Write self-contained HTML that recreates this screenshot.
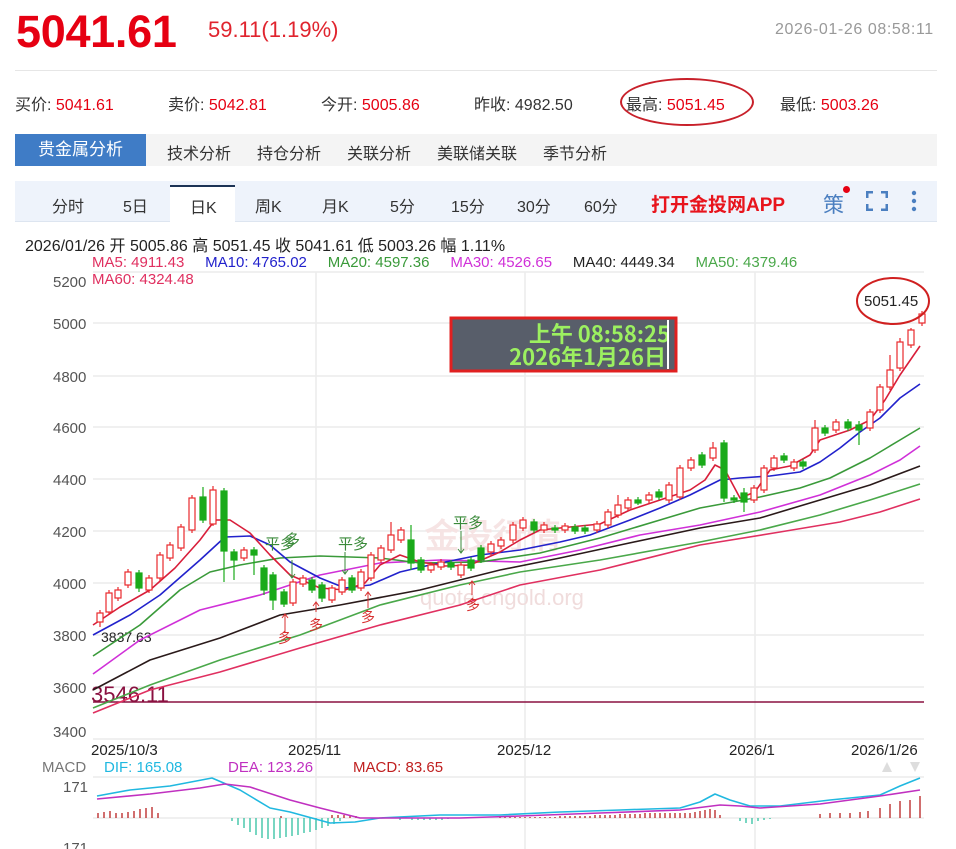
<!DOCTYPE html>
<html><head><meta charset="utf-8">
<style>
*{margin:0;padding:0;box-sizing:border-box}
body{width:956px;height:849px;background:#fff;font-family:"Liberation Sans","Noto Sans CJK SC",sans-serif;position:relative;overflow:hidden;color:#333}
.a{position:absolute;white-space:nowrap}
.r{color:#e60012}
</style></head><body>
<div class="a r" style="left:16px;top:6px;font-size:45px;font-weight:bold;letter-spacing:-0.3px">5041.61</div>
<div class="a r" style="left:208px;top:17px;font-size:22px;color:#e0242e">59.11(1.19%)</div>
<div class="a" style="left:775px;top:21px;font-size:16px;color:#999;letter-spacing:0.6px">2026-01-26 08:58:11</div>
<div class="a" style="left:15px;top:70px;width:922px;height:1px;background:#e6e6e6"></div>
<div class="a" style="left:15px;top:91px;font-size:16px;color:#333">买价: <span class="r">5041.61</span></div>
<div class="a" style="left:168px;top:91px;font-size:16px">卖价: <span class="r">5042.81</span></div>
<div class="a" style="left:321px;top:91px;font-size:16px">今开: <span class="r">5005.86</span></div>
<div class="a" style="left:474px;top:91px;font-size:16px">昨收: 4982.50</div>
<div class="a" style="left:626px;top:91px;font-size:16px">最高: <span class="r">5051.45</span></div>
<div class="a" style="left:620px;top:78px;width:134px;height:48px;border:2px solid #c8202a;border-radius:50%"></div>
<div class="a" style="left:780px;top:91px;font-size:16px">最低: <span class="r">5003.26</span></div>
<div class="a" style="left:15px;top:134px;width:922px;height:32px;background:#f4f4f4"></div>
<div class="a" style="left:15px;top:134px;width:131px;height:32px;background:#3f7cc6;color:#fff;font-size:17px;line-height:32px;text-align:center">贵金属分析</div>
<div class="a" style="left:167px;top:140px;font-size:16px">技术分析</div>
<div class="a" style="left:257px;top:140px;font-size:16px">持仓分析</div>
<div class="a" style="left:347px;top:140px;font-size:16px">关联分析</div>
<div class="a" style="left:437px;top:140px;font-size:16px">美联储关联</div>
<div class="a" style="left:543px;top:140px;font-size:16px">季节分析</div>
<div class="a" style="left:15px;top:181px;width:922px;height:41px;background:#eef3fb;border-bottom:1px solid #dde5f0"></div>
<div class="a" style="left:170px;top:185px;width:65px;height:37px;background:#fff;border-top:2px solid #1c3355"></div>
<div class="a" style="left:52px;top:193px;font-size:16px">分时</div>
<div class="a" style="left:123px;top:193px;font-size:16px">5日</div>
<div class="a" style="left:190px;top:194px;font-size:16px">日K</div>
<div class="a" style="left:255px;top:193px;font-size:16px">周K</div>
<div class="a" style="left:322px;top:193px;font-size:16px">月K</div>
<div class="a" style="left:390px;top:193px;font-size:16px">5分</div>
<div class="a" style="left:451px;top:193px;font-size:16px">15分</div>
<div class="a" style="left:517px;top:193px;font-size:16px">30分</div>
<div class="a" style="left:584px;top:193px;font-size:16px">60分</div>
<div class="a" style="left:651px;top:190px;font-size:19px;font-weight:bold;color:#e8141c">打开金投网APP</div>
<div class="a" style="left:823px;top:189px;font-size:21px;color:#4b7fc0">策</div>
<div class="a" style="left:843px;top:186px;width:7px;height:7px;border-radius:50%;background:#e60012"></div>
<svg class="a" style="left:866px;top:191px" width="22" height="20"><path d="M1 7V1h6M15 1h6v6M21 13v6h-6M7 19H1v-6" fill="none" stroke="#4b7fc0" stroke-width="3"/></svg>
<svg class="a" style="left:910px;top:190px" width="8" height="22"><circle cx="4" cy="3" r="2.2" fill="#4b7fc0"/><circle cx="4" cy="11" r="2.2" fill="#4b7fc0"/><circle cx="4" cy="19" r="2.2" fill="#4b7fc0"/></svg>

<div class="a" style="left:25px;top:232px;font-size:16px;color:#222">2026/01/26 开 5005.86 高 5051.45 收 5041.61 低 5003.26 幅 1.11%</div>
<div class="a" style="left:92px;top:254px;font-size:15px"><span style="color:#e03060">MA5: 4911.43</span>&nbsp;&nbsp;&nbsp;&nbsp; <span style="color:#2222cc">MA10: 4765.02</span>&nbsp;&nbsp;&nbsp;&nbsp; <span style="color:#3a9a3a">MA20: 4597.36</span>&nbsp;&nbsp;&nbsp;&nbsp; <span style="color:#d030d8">MA30: 4526.65</span>&nbsp;&nbsp;&nbsp;&nbsp; <span style="color:#222">MA40: 4449.34</span>&nbsp;&nbsp;&nbsp;&nbsp; <span style="color:#4aa84a">MA50: 4379.46</span></div>
<div class="a" style="left:92px;top:271px;font-size:15px;color:#e03060">MA60: 4324.48</div>

<svg class="a" style="left:0;top:0" width="956" height="849" font-family="Liberation Sans, sans-serif">
<g stroke="#ececec" stroke-width="1.5">
<line x1="93" y1="323" x2="924" y2="323"/><line x1="93" y1="376" x2="924" y2="376"/><line x1="93" y1="427" x2="924" y2="427"/><line x1="93" y1="479" x2="924" y2="479"/><line x1="93" y1="531" x2="924" y2="531"/><line x1="93" y1="583" x2="924" y2="583"/><line x1="93" y1="635" x2="924" y2="635"/><line x1="93" y1="687" x2="924" y2="687"/><line x1="93" y1="739" x2="924" y2="739"/>
<line x1="93" y1="272" x2="924" y2="272"/>
<line x1="316" y1="272" x2="316" y2="849"/><line x1="525" y1="272" x2="525" y2="849"/><line x1="755" y1="272" x2="755" y2="849"/>
<line x1="93" y1="777" x2="924" y2="777"/><line x1="93" y1="818" x2="924" y2="818"/>
</g>
<g font-size="15" fill="#555">
<text x="53" y="287">5200</text><text x="53" y="329">5000</text><text x="53" y="382">4800</text><text x="53" y="433">4600</text><text x="53" y="485">4400</text><text x="53" y="537">4200</text><text x="53" y="589">4000</text><text x="53" y="641">3800</text><text x="53" y="693">3600</text><text x="53" y="737">3400</text>
<text x="63" y="792">171</text><text x="63" y="853">171</text>
</g>
<g font-size="15" fill="#222">
<text x="91" y="755">2025/10/3</text><text x="288" y="755">2025/11</text><text x="497" y="755">2025/12</text><text x="729" y="755">2026/1</text><text x="851" y="755">2026/1/26</text>
</g>
<text x="42" y="772" font-size="15" fill="#777">MACD</text>
<text x="104" y="772" font-size="15" fill="#20b8e0">DIF: 165.08</text>
<text x="228" y="772" font-size="15" fill="#c030c0">DEA: 123.26</text>
<text x="353" y="772" font-size="15" fill="#c02020">MACD: 83.65</text>
<path d="M882 772l5-10 5 10zM910 762l5 10 5-10z" fill="#ddd"/>
<text x="420" y="605" font-size="22" fill="#f0dcdc">quote.cngold.org</text>
<text x="425" y="548" font-size="34" fill="#f6e4e4" font-weight="bold">金投行情</text>
<line x1="93" y1="702" x2="924" y2="702" stroke="#8a1040" stroke-width="1.5"/>
<text x="91" y="702" font-size="22" fill="#8a1040">3546.11</text>
<text x="101" y="642" font-size="14" fill="#222">3837.63</text>
<!-- MAs -->
<g fill="none" stroke-width="1.6" stroke-linejoin="round">
<polyline points="93,713 150,690 220,672 300,648 380,625 460,605 520,585 600,570 700,545 780,532 840,522 880,512 920,499" stroke="#e03060"/>
<polyline points="93,708 150,685 220,660 300,635 380,605 460,585 520,572 600,560 700,542 760,530 820,515 870,500 920,484" stroke="#4aa84a"/>
<polyline points="93,690 150,660 220,638 280,615 340,605 420,590 500,570 560,558 620,545 700,528 760,518 820,500 870,485 920,466" stroke="#2a1a1a"/>
<polyline points="93,674 140,640 200,610 260,595 320,575 380,563 440,560 520,562 580,550 640,535 700,525 760,512 820,495 870,475 900,460 920,446" stroke="#d030d8"/>
<polyline points="93,656 140,625 180,590 210,572 240,565 280,558 320,556 380,558 420,563 480,562 540,553 600,538 660,520 700,508 760,497 800,488 830,478 870,458 900,440 920,428" stroke="#3a9a3a"/>
<polyline points="93,635 130,615 160,595 200,560 225,537 250,536 270,545 290,562 320,578 345,588 370,585 400,572 430,565 480,555 520,550 560,542 590,535 630,520 660,508 690,495 710,485 720,480 740,478 770,476 800,472 820,462 840,448 860,432 880,418 900,398 920,384" stroke="#2222cc"/>
<polyline points="93,625 120,607 150,590 175,568 200,540 215,520 230,520 250,533 270,555 290,575 320,588 345,590 365,583 380,565 400,555 420,562 445,566 470,565 500,552 520,540 540,530 570,527 600,524 630,510 660,500 690,490 705,480 715,465 725,470 740,498 755,492 770,470 790,466 810,455 820,440 850,430 870,420 885,400 900,375 920,346" stroke="#d81e3a"/>
</g>
<!-- candles -->
<g stroke="#e8292c" fill="#fff" stroke-width="1.2">
<path d="M100 610v17M109 590v25M118 587v14M128 569v19M149 575v18M160 552v29M170 542v19M181 524v27M192 495v38M213 486v40M244 547v14M293 579v27M303 575v12M332 585v18M342 577v18M361 569v22M371 552v29M381 545v18M391 522v31M401 527v16M431 562v11M441 559v11M461 562v16M491 541v14M501 537v12M513 522v21M523 517v14M544 522v11M565 523v10M597 521v12M608 509v19M618 495v23M628 497v14M649 492v11M669 482v21M680 465v35M691 457v14M713 442v19M754 485v18M764 465v28M774 455v16M794 459v12M815 420v33M836 419v14M870 409v22M880 384v29M890 355v35M900 338v33M911 328v20M922 311v15"/>
<rect x="97" y="613" width="6" height="9"/><rect x="106" y="593" width="6" height="19"/><rect x="115" y="590" width="6" height="8"/><rect x="125" y="572" width="6" height="13"/><rect x="146" y="578" width="6" height="12"/><rect x="157" y="555" width="6" height="23"/><rect x="167" y="545" width="6" height="13"/><rect x="178" y="527" width="6" height="21"/><rect x="189" y="498" width="6" height="32"/><rect x="210" y="490" width="6" height="34"/><rect x="241" y="550" width="6" height="8"/><rect x="290" y="582" width="6" height="21"/><rect x="300" y="578" width="6" height="6"/><rect x="329" y="588" width="6" height="12"/><rect x="339" y="580" width="6" height="12"/><rect x="358" y="572" width="6" height="16"/><rect x="368" y="555" width="6" height="23"/><rect x="378" y="548" width="6" height="12"/><rect x="388" y="535" width="6" height="15"/><rect x="398" y="530" width="6" height="10"/><rect x="428" y="565" width="6" height="5"/><rect x="438" y="562" width="6" height="5"/><rect x="458" y="565" width="6" height="10"/><rect x="488" y="544" width="6" height="8"/><rect x="498" y="540" width="6" height="6"/><rect x="510" y="525" width="6" height="15"/><rect x="520" y="520" width="6" height="8"/><rect x="541" y="525" width="6" height="5"/><rect x="562" y="526" width="6" height="4"/><rect x="594" y="524" width="6" height="6"/><rect x="605" y="512" width="6" height="13"/><rect x="615" y="505" width="6" height="10"/><rect x="625" y="500" width="6" height="8"/><rect x="646" y="495" width="6" height="5"/><rect x="666" y="485" width="6" height="15"/><rect x="677" y="468" width="6" height="29"/><rect x="688" y="460" width="6" height="8"/><rect x="710" y="448" width="6" height="10"/><rect x="751" y="488" width="6" height="12"/><rect x="761" y="468" width="6" height="22"/><rect x="771" y="458" width="6" height="10"/><rect x="791" y="462" width="6" height="6"/><rect x="812" y="428" width="6" height="22"/><rect x="833" y="422" width="6" height="8"/><rect x="867" y="412" width="6" height="16"/><rect x="877" y="387" width="6" height="23"/><rect x="887" y="370" width="6" height="17"/><rect x="897" y="342" width="6" height="26"/><rect x="908" y="330" width="6" height="15"/><rect x="919" y="314" width="6" height="9"/>
</g>
<g stroke="#1aaa1a" fill="#1aaa1a" stroke-width="1.2">
<path d="M139 570v22M203 487v36M224 488v94M234 549v31M254 547v28M264 565v30M273 572v38M284 589v18M312 577v16M322 582v20M352 575v18M411 525v45M421 557v16M451 560v10M471 557v14M481 545v18M534 519v14M555 525v8M575 524v10M585 525v9M638 497v8M659 489v11M702 452v16M724 440v62M734 495v8M744 488v24M784 453v10M803 459v10M825 425v11M848 419v12M859 421v24"/>
<rect x="136" y="573" width="6" height="15"/><rect x="200" y="497" width="6" height="23"/><rect x="221" y="491" width="6" height="60"/><rect x="231" y="552" width="6" height="8"/><rect x="251" y="550" width="6" height="5"/><rect x="261" y="568" width="6" height="22"/><rect x="270" y="575" width="6" height="25"/><rect x="281" y="592" width="6" height="12"/><rect x="309" y="580" width="6" height="10"/><rect x="319" y="585" width="6" height="13"/><rect x="349" y="578" width="6" height="12"/><rect x="408" y="540" width="6" height="23"/><rect x="418" y="560" width="6" height="10"/><rect x="448" y="563" width="6" height="4"/><rect x="468" y="560" width="6" height="8"/><rect x="478" y="548" width="6" height="12"/><rect x="531" y="522" width="6" height="8"/><rect x="552" y="528" width="6" height="2"/><rect x="572" y="527" width="6" height="4"/><rect x="582" y="528" width="6" height="3"/><rect x="635" y="500" width="6" height="3"/><rect x="656" y="492" width="6" height="5"/><rect x="699" y="455" width="6" height="10"/><rect x="721" y="443" width="6" height="55"/><rect x="731" y="498" width="6" height="2"/><rect x="741" y="493" width="6" height="9"/><rect x="781" y="456" width="6" height="4"/><rect x="800" y="462" width="6" height="4"/><rect x="822" y="428" width="6" height="5"/><rect x="845" y="422" width="6" height="6"/><rect x="856" y="425" width="6" height="5"/>
</g>
<!-- signals -->
<g font-size="15" fill="#3a8a3a">
<text x="265" y="549">平多</text><text x="285" y="545">多</text><text x="338" y="549">平多</text><text x="453" y="528">平多</text>
</g>
<g stroke="#3a8a3a" fill="none"><path d="M292 560v18m-3-4l3 4 3-4M345 552v22m-3-4l3 4 3-4M461 531v22m-3-4l3 4 3-4"/></g>
<g stroke="#d83030" fill="none"><path d="M285 632v-18m-3 4l3-4 3 4M316 612v-10m-3 4l3-4 3 4M368 608v-16m-3 4l3-4 3 4M472 595v-14m-3 4l3-4 3 4"/></g>
<g font-size="14" fill="#d83030"><text x="278" y="643">多</text><text x="309" y="630">多</text><text x="361" y="622">多</text><text x="466" y="610">多</text></g>
<!-- tooltip box -->
<rect x="451" y="318" width="225" height="53" fill="#585e6a" stroke="#e02020" stroke-width="3"/>
<text x="670" y="342" font-size="22" font-weight="bold" fill="#9cf060" text-anchor="end" font-family="Noto Sans CJK SC, sans-serif">上午 08:58:25</text>
<text x="666" y="365" font-size="22" font-weight="bold" fill="#9cf060" text-anchor="end" font-family="Noto Sans CJK SC, sans-serif">2026年1月26日</text>
<line x1="668" y1="320" x2="668" y2="369" stroke="#fff" stroke-width="2"/>
<ellipse cx="893" cy="301" rx="36" ry="23" fill="none" stroke="#d02020" stroke-width="2"/>
<text x="864" y="306" font-size="15" fill="#222">5051.45</text>
<!-- MACD -->
<g stroke="#b82020" stroke-width="1.3">
<path d="M98 818v-5M104 818v-6M110 818v-7M116 818v-5M122 818v-5M128 818v-6M134 818v-7M140 818v-9M146 818v-10M152 818v-11M158 818v-5M281 818v-2M406 818v-2M500 818v-1M505 818v-1M510 818v-1M515 818v-1M520 818v-1M525 818v-1M530 818v-1M535 818v-1M540 818v-1M545 818v-1M550 818v-1M555 818v-1M560 818v-2M565 818v-2M570 818v-2M575 818v-2M580 818v-2M585 818v-2M590 818v-2M595 818v-3M600 818v-3M605 818v-3M610 818v-3M615 818v-3M620 818v-4M625 818v-4M630 818v-4M635 818v-4M640 818v-4M645 818v-5M650 818v-5M655 818v-5M660 818v-5M665 818v-5M670 818v-5M675 818v-5M680 818v-5M685 818v-5M690 818v-5M695 818v-6M700 818v-7M705 818v-8M710 818v-9M715 818v-8M720 818v-3M820 818v-4M830 818v-5M840 818v-5M850 818v-5M860 818v-6M868 818v-7M880 818v-10M890 818v-14M900 818v-17M910 818v-18M920 818v-22M332 818v-3M338 818v-3M344 818v-3M350 818v-2M356 818v-2"/>
</g>
<g stroke="#30c0a0" stroke-width="1.3">
<path d="M232 818v3M238 818v7M244 818v10M250 818v14M256 818v17M262 818v20M268 818v21M274 818v21M280 818v20M286 818v19M292 818v18M298 818v17M304 818v15M310 818v14M316 818v12M322 818v10M328 818v8M334 818v6M340 818v3M400 818v2M412 818v2M418 818v2M424 818v2M430 818v2M436 818v2M442 818v2M448 818v1M740 818v3M746 818v5M752 818v6M758 818v3M764 818v2M770 818v1"/>
</g>
<polyline points="97,796 130,790 170,786 212,778 240,790 270,808 290,812 330,823 355,822 380,818 440,815 500,815 560,812 620,810 680,808 700,802 715,794 730,800 750,806 780,806 830,800 880,795 900,786 920,778" fill="none" stroke="#20b8e0" stroke-width="1.6" stroke-linejoin="round"/>
<polyline points="97,799 150,794 200,788 225,784 250,787 290,800 320,808 360,818 400,818 460,818 520,816 600,813 680,810 720,805 740,806 760,808 820,804 880,796 920,790" fill="none" stroke="#c030c0" stroke-width="1.6" stroke-linejoin="round"/>
</svg>
</body></html>
